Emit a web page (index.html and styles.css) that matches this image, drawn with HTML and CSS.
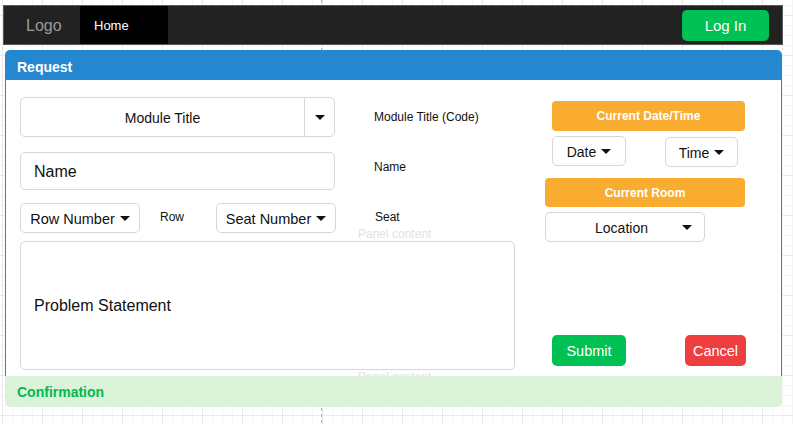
FILE: index.html
```html
<!DOCTYPE html>
<html lang="en">
<head>
<meta charset="utf-8">
<title>Request</title>
<link rel="stylesheet" href="styles.css">
</head>
<body>
<nav class="navbar">
  <span class="brand">Logo</span>
  <a class="nav-item active">Home</a>
  <button class="btn btn-login">Log In</button>
</nav>

<section class="panel">
  <header class="panel-heading">Request</header>
  <div class="panel-body">
    <div class="form-left">
      <div class="form-row row-1">
        <div class="select select-split">
          <span class="select-text">Module Title</span>
          <span class="select-addon"><span class="caret"></span></span>
        </div>
        <span class="field-label">Module Title (Code)</span>
      </div>
      <div class="form-row row-2">
        <div class="input">Name</div>
        <span class="field-label label-raised">Name</span>
      </div>
      <div class="form-row row-3">
        <div class="select select-sm">Row Number <span class="caret"></span></div>
        <span class="inline-label">Row</span>
        <div class="select select-sm">Seat Number <span class="caret"></span></div>
        <span class="field-label label-seat">Seat</span>
      </div>
      <div class="form-row row-4">
        <div class="textarea">Problem Statement</div>
      </div>
    </div>

    <div class="form-right">
      <div class="bar bar-datetime">Current Date/Time</div>
      <div class="pair">
        <div class="select select-date">Date <span class="caret"></span></div>
        <div class="select select-time">Time <span class="caret"></span></div>
      </div>
      <div class="bar bar-room">Current Room</div>
      <div class="select select-location"><span class="select-text">Location</span><span class="caret"></span></div>
      <div class="actions">
        <button class="btn btn-submit">Submit</button>
        <button class="btn btn-cancel">Cancel</button>
      </div>
    </div>

    <span class="ghost ghost-1">Panel content</span>
    <span class="ghost ghost-2">Panel content</span>
  </div>
  <footer class="panel-confirm">Confirmation</footer>
</section>
</body>
</html>
```

FILE: styles.css
```css
* { box-sizing: border-box; }

html, body { height: 100%; }

body {
  margin: 0;
  font-family: "Liberation Sans", Arial, Helvetica, sans-serif;
  color: #111;
  background-color: #fff;
  background-image:
    repeating-linear-gradient(to bottom, #b5b5b5 0 3px, transparent 3px 6px),
    linear-gradient(to bottom, #e9e9e9 1px, transparent 1px),
    linear-gradient(to right, #e9e9e9 1px, transparent 1px),
    linear-gradient(to bottom, #f4f4f4 1px, transparent 1px),
    linear-gradient(to right, #f4f4f4 1px, transparent 1px);
  background-size: 1px 100%, 40px 40px, 40px 40px, 10px 10px, 10px 10px;
  background-position: 321px 0, 2px 15px, 2px 15px, 2px 15px, 2px 15px;
  background-repeat: no-repeat, repeat, repeat, repeat, repeat;
}

/* ---------- nav ---------- */
.navbar {
  display: flex;
  align-items: center;
  width: 780px;
  height: 40px;
  margin: 5px 0 0 3px;
  background: #222;
  border: 1px solid #5a5a5a;
}

.brand {
  width: 76px;
  padding-left: 22px;
  padding-top: 2px;
  font-size: 16px;
  color: #9b9b9b;
}

.nav-item {
  align-self: stretch;
  display: flex;
  align-items: center;
  width: 88px;
  padding-left: 14px;
  background: #000;
  color: #fff;
  font-size: 13px;
}

.btn {
  border: 0;
  border-radius: 5px;
  color: #fff;
  font-family: inherit;
  padding: 0;
  cursor: pointer;
}

.btn-login {
  margin-left: auto;
  margin-right: 13px;
  width: 87px;
  height: 31px;
  background: #00c254;
  font-size: 15px;
}

/* ---------- panel ---------- */
.panel {
  width: 777px;
  margin: 5px 0 0 5px;
}

.panel-heading {
  height: 30px;
  padding: 9px 0 0 12px;
  background: #2687d1;
  border-radius: 5px 5px 0 0;
  color: #fff;
  font-weight: bold;
  font-size: 14px;
}

.panel-body {
  position: relative;
  display: flex;
  border-left: 1px solid #2687d1;
  border-right: 1px solid #2687d1;
  background: #fff;
}

.form-left {
  width: 529px;
  padding: 17px 0 6px 14px;
}

.form-row {
  display: flex;
  align-items: center;
}

.row-2 { margin-top: 15px; }
.row-3 { margin-top: 13px; }
.row-4 { margin-top: 8px; }

.field-label {
  margin-left: 39px;
  font-size: 12px;
}

.label-raised { padding-bottom: 8px; }
.label-seat { margin-left: 39px; padding-bottom: 2px; }

.inline-label {
  width: 76px;
  padding-left: 20px;
  padding-bottom: 2px;
  font-size: 12px;
}

.select, .input, .textarea {
  background: #fff;
  border: 1px solid #d6d6d6;
  border-radius: 5px;
}

.select {
  display: flex;
  align-items: center;
  justify-content: center;
  gap: 5px;
  height: 30px;
  padding-top: 2px;
  font-size: 14px;
}

.caret {
  display: inline-block;
  width: 0;
  height: 0;
  margin-top: -2px;
  border-left: 5px solid transparent;
  border-right: 5px solid transparent;
  border-top: 5px solid #111;
}

.select-split {
  width: 315px;
  height: 40px;
  gap: 0;
  padding-top: 0;
}

.select-split .select-text {
  flex: 1;
  text-align: center;
  padding-top: 2px;
}

.select-split .caret { margin-top: 0; }

.select-addon {
  align-self: stretch;
  display: flex;
  align-items: center;
  justify-content: center;
  width: 30px;
  border-left: 1px solid #d6d6d6;
}

.input {
  display: flex;
  align-items: center;
  width: 315px;
  height: 38px;
  padding: 2px 0 0 13px;
  font-size: 16px;
}

.select-sm { width: 120px; font-size: 14.5px; }

.textarea {
  display: flex;
  align-items: center;
  width: 495px;
  height: 129px;
  padding: 0 0 0 13px;
  font-size: 16px;
}

/* ---------- right column ---------- */
.form-right {
  width: 201px;
  margin-left: 10px;
  padding-top: 21px;
}

.bar {
  display: flex;
  align-items: center;
  justify-content: center;
  background: #f9ac2f;
  border-radius: 4px;
  color: #fff;
  font-weight: bold;
  font-size: 12px;
}

.bar-datetime {
  width: 193px;
  height: 30px;
  margin-left: 7px;
}

.pair {
  display: flex;
  margin-top: 5px;
}

.select-date { width: 74px; margin-left: 7px; }
.select-time { width: 73px; margin-left: 39px; margin-top: 1px; }

.bar-room {
  width: 200px;
  height: 29px;
  margin-top: 11px;
}

.select-location {
  width: 160px;
  margin-top: 5px;
  padding: 2px 12px 0 20px;
}

.select-location .select-text {
  flex: 1;
  text-align: center;
}

.actions {
  display: flex;
  margin-top: 93px;
}

.btn-submit {
  width: 74px;
  height: 31px;
  margin-left: 7px;
  background: #00c254;
  font-size: 14.5px;
}

.btn-cancel {
  width: 61px;
  height: 31px;
  margin-left: 59px;
  background: #ef3e3f;
  font-size: 14.5px;
}

/* faint "Panel content" placeholders */
.ghost {
  position: absolute;
  left: 352px;
  font-size: 12px;
  color: #e2e2e2;
}

.ghost-1 { top: 147px; }
.ghost-2 { top: 290px; }

/* ---------- confirmation ---------- */
.panel-confirm {
  position: relative;
  height: 31px;
  padding: 8px 0 0 12px;
  background: #dbf3d8;
  border-radius: 0 0 5px 5px;
  color: #00b94f;
  font-weight: bold;
  font-size: 14px;
}
```
